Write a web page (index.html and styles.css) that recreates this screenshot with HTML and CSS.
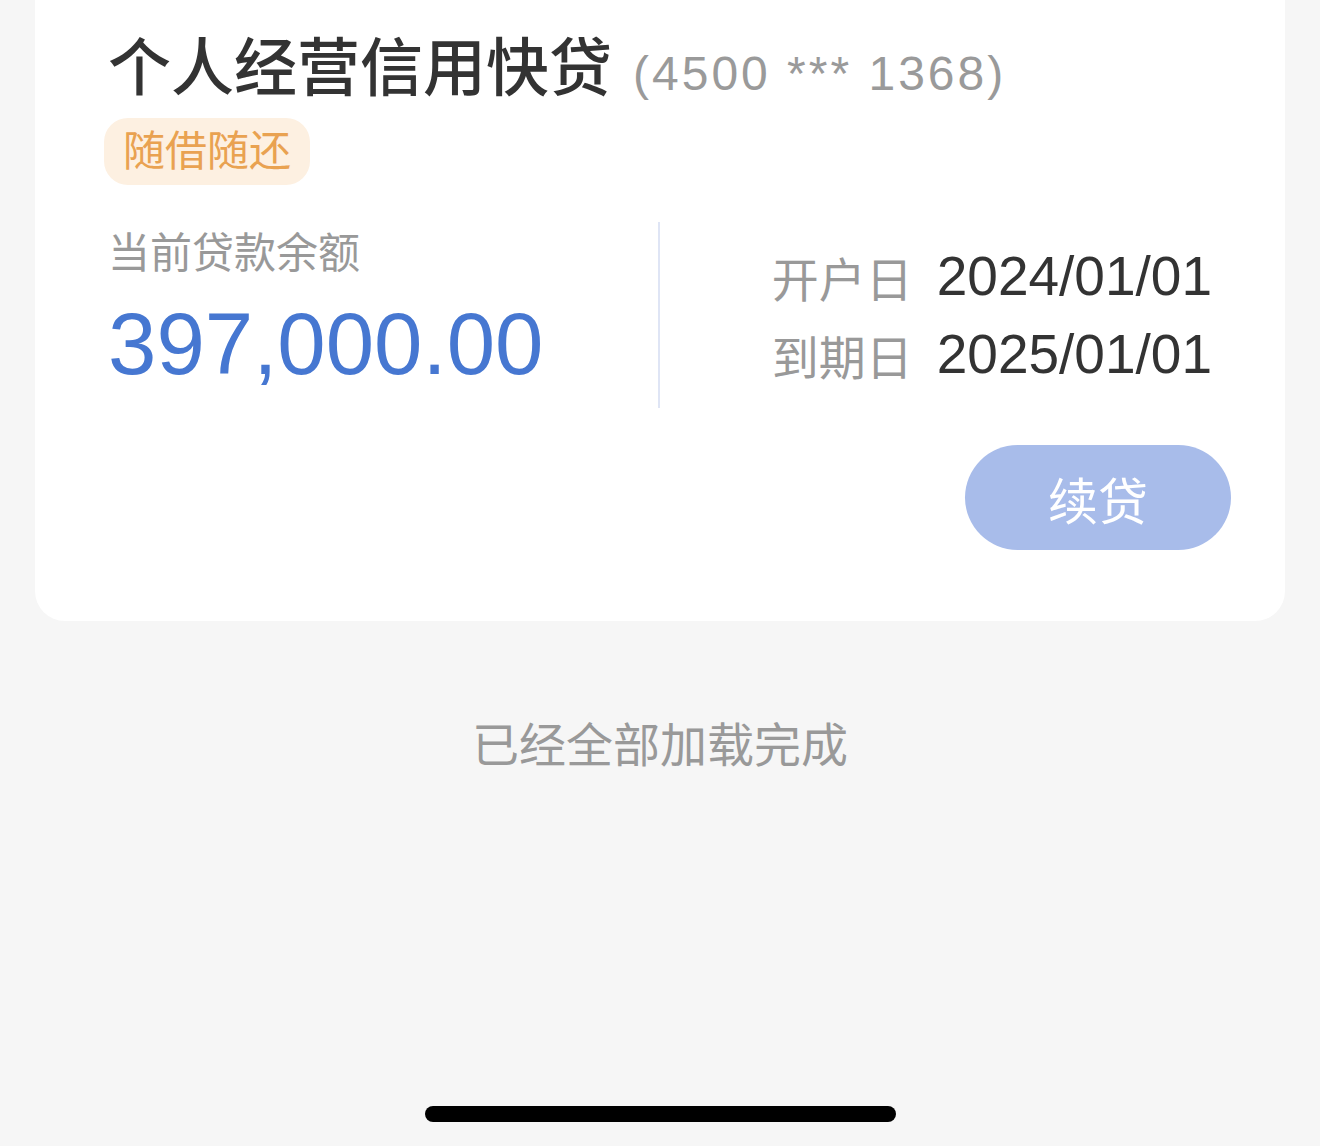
FILE: index.html
```html
<!DOCTYPE html>
<html lang="zh-CN">
<head>
    <meta charset="UTF-8">
    <meta name="viewport" content="width=device-width, initial-scale=1.0">
    <title>我的贷款</title>
    <link rel="stylesheet" href="styles.css">
</head>
<body>
    <div class="card">
        <h1 class="loan-title">个人经营信用快贷<span class="loan-no">(4500 *** 1368)</span></h1>
        <div class="tag">随借随还</div>

        <div class="loan-body">
            <div class="balance">
                <div class="balance-label">当前贷款余额</div>
                <div class="balance-amount">397,000.00</div>
            </div>
            <div class="divider"></div>
            <div class="dates">
                <div class="date-row">
                    <span class="date-label">开户日</span>
                    <span class="date-value">2024/01/01</span>
                </div>
                <div class="date-row">
                    <span class="date-label">到期日</span>
                    <span class="date-value">2025/01/01</span>
                </div>
            </div>
        </div>

        <div class="actions">
            <button class="renew-btn">续贷</button>
        </div>
    </div>

    <p class="list-end">已经全部加载完成</p>

    <div class="home-bar"></div>
</body>
</html>
```

FILE: styles.css
```css
* {
    box-sizing: border-box;
}
body {
    margin: 0;
    padding: 0;
    min-height: 100vh;
    background-color: #f6f6f6;
    font-family: "Liberation Sans", "Noto Sans CJK SC", sans-serif;
    color: #333;
}
.card {
    margin: 0 35px;
    padding: 28px 54px 71px 73px;
    background: #fff;
    border-radius: 0 0 30px 30px;
}
.loan-title {
    margin: 0;
    font-size: 63px;
    line-height: 80px;
    font-weight: 500;
    color: #333;
    white-space: nowrap;
}
.loan-no {
    margin-left: 21px;
    font-size: 48px;
    font-weight: 400;
    letter-spacing: 3px;
    color: #9a9a9a;
}
.tag {
    width: fit-content;
    margin-top: 4px;
    margin-left: -4px;
    padding: 0 19px;
    height: 67px;
    line-height: 67px;
    font-size: 42px;
    color: #e9a251;
    background: #fdf0e1;
    border-radius: 24px;
}
.loan-body {
    display: flex;
    align-items: center;
    margin-top: 37px;
}
.balance {
    width: 550px;
    align-self: flex-start;
    padding-top: 4px;
}
.balance-label {
    font-size: 42px;
    line-height: 56px;
    color: #999;
}
.balance-amount {
    margin-top: 12px;
    font-size: 87px;
    line-height: 100px;
    color: #4677d1;
}
.divider {
    width: 2px;
    height: 186px;
    background: #dfe5f5;
}
.dates {
    flex: 1;
    display: flex;
    flex-direction: column;
    align-items: flex-end;
    padding-right: 19px;
}
.date-row {
    display: flex;
    align-items: center;
    gap: 24px;
    height: 78px;
}
.date-label {
    font-size: 47px;
    color: #999;
}
.date-value {
    font-size: 55px;
    color: #333;
}
.actions {
    display: flex;
    justify-content: flex-end;
    margin-top: 37px;
}
.renew-btn {
    width: 266px;
    height: 105px;
    border: none;
    border-radius: 53px;
    background: #a8bcea;
    color: #fff;
    font-family: inherit;
    font-size: 50px;
    cursor: pointer;
}
.list-end {
    margin: 95px 0 0;
    text-align: center;
    font-size: 47px;
    line-height: 60px;
    color: #999;
}
.home-bar {
    position: fixed;
    left: 425px;
    bottom: 24px;
    width: 471px;
    height: 16px;
    border-radius: 8px;
    background: #000;
}
```
